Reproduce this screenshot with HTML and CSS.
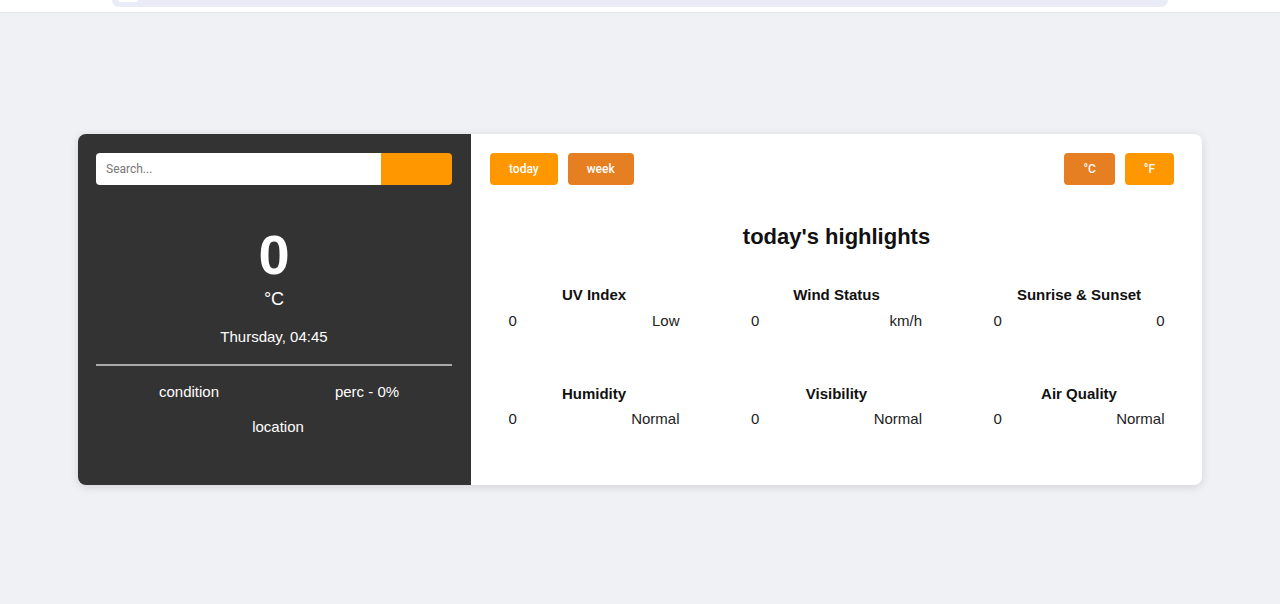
FILE: index.html
```html
<!DOCTYPE html>
<html lang="en">
<head>
<meta charset="utf-8">
<title>Weather</title>
<link rel="stylesheet" href="styles.css">
</head>
<body>
<div class="topbar">
  <div class="addr"><span class="addr-pill"></span></div>
</div>
<main class="page">
  <div class="card">
    <section class="left">
      <form class="search">
        <input class="search-input" type="text" placeholder="Search...">
        <button class="search-btn" type="button"></button>
      </form>
      <div class="temp">0</div>
      <div class="unit">°C</div>
      <div class="date">Thursday, 04:45</div>
      <div class="divider"></div>
      <div class="meta">
        <div class="meta-row">
          <span class="meta-item">condition</span>
          <span class="meta-item">perc - 0%</span>
        </div>
        <div class="location">location</div>
      </div>
    </section>
    <section class="right">
      <div class="toolbar">
        <div class="btn-group">
          <button class="btn btn-light" type="button">today</button>
          <button class="btn btn-dark" type="button">week</button>
        </div>
        <div class="btn-group">
          <button class="btn btn-dark" type="button">°C</button>
          <button class="btn btn-light" type="button">°F</button>
        </div>
      </div>
      <h2 class="heading">today's highlights</h2>
      <div class="grid">
        <div class="cell">
          <div class="cell-title">UV Index</div>
          <div class="cell-row"><span>0</span><span>Low</span></div>
        </div>
        <div class="cell">
          <div class="cell-title">Wind Status</div>
          <div class="cell-row"><span>0</span><span>km/h</span></div>
        </div>
        <div class="cell">
          <div class="cell-title">Sunrise &amp; Sunset</div>
          <div class="cell-row"><span>0</span><span>0</span></div>
        </div>
        <div class="cell">
          <div class="cell-title">Humidity</div>
          <div class="cell-row"><span>0</span><span>Normal</span></div>
        </div>
        <div class="cell">
          <div class="cell-title">Visibility</div>
          <div class="cell-row"><span>0</span><span>Normal</span></div>
        </div>
        <div class="cell">
          <div class="cell-title">Air Quality</div>
          <div class="cell-row"><span>0</span><span>Normal</span></div>
        </div>
      </div>
    </section>
  </div>
</main>
</body>
</html>
```

FILE: styles.css
```css
* { box-sizing: border-box; }

html, body {
  margin: 0;
  padding: 0;
}

body {
  background: #f0f1f5;
  font-family: "Liberation Sans", Arial, sans-serif;
  height: 604px;
  overflow: hidden;
}

.topbar {
  height: 13px;
  background: #ffffff;
  border-bottom: 1px solid #e4e5e8;
  padding-left: 112px;
}

.addr {
  width: 1056px;
  height: 7px;
  background: #e9ebf7;
  border-radius: 0 0 10px 10px;
  padding-left: 6px;
}

.addr-pill {
  display: block;
  width: 20px;
  height: 2px;
  background: #ffffff;
  border-radius: 0 0 4px 4px;
}

.page {
  display: flex;
  justify-content: center;
  padding-top: 121px;
}

.card {
  display: flex;
  width: 1124px;
  height: 351px;
  border-radius: 8px;
  box-shadow: 0 2px 10px rgba(0, 0, 0, 0.12);
  background: #ffffff;
}

.left {
  width: 393px;
  background: #333333;
  color: #ffffff;
  border-radius: 8px 0 0 8px;
  padding: 19px 19px 0 18px;
  text-align: center;
}

.search {
  display: flex;
  height: 32px;
  margin: 0;
}

.search-input {
  width: 285px;
  height: 32px;
  border: none;
  outline: none;
  border-radius: 4px 0 0 4px;
  padding: 0 10px;
  font-family: Roboto, "Liberation Sans", sans-serif;
  font-size: 12px;
  color: #333;
  background: #ffffff;
}

.search-input::placeholder {
  color: #777777;
}

.search-btn {
  width: 71px;
  height: 32px;
  border: none;
  background: #ff9800;
  border-radius: 0 4px 4px 0;
  padding: 0;
}

.temp {
  margin-top: 40px;
  font-size: 56px;
  font-weight: 700;
  line-height: 60px;
}

.unit {
  margin-top: 4px;
  font-size: 18px;
  line-height: 20px;
}

.date {
  margin-top: 19px;
  font-size: 15px;
  line-height: 18px;
}

.divider {
  margin-top: 18px;
  height: 2px;
  background: #a9a9a9;
}

.meta {
  padding-left: 4px;
  margin-right: -4px;
  font-size: 15px;
  line-height: 18px;
}

.meta-row {
  display: grid;
  grid-template-columns: 1fr 1fr;
  margin-top: 17px;
}

.location {
  margin-top: 17px;
}

.right {
  flex: 1;
  padding-top: 19px;
  border-radius: 0 8px 8px 0;
  color: #111111;
}

.toolbar {
  display: flex;
  justify-content: space-between;
  padding: 0 28px 0 19px;
}

.btn-group {
  display: flex;
  gap: 10px;
}

.btn {
  height: 32px;
  border: none;
  border-radius: 4px;
  padding: 0 19px;
  color: #ffffff;
  font-family: Roboto, "Liberation Sans", sans-serif;
  font-size: 12px;
  font-weight: 500;
}

.btn-light { background: #ff9800; }
.btn-dark { background: #e67e22; }

.heading {
  margin: 39px 0 0;
  text-align: center;
  font-size: 22px;
  line-height: 26px;
  font-weight: 700;
  color: #111111;
}

.grid {
  display: grid;
  grid-template-columns: repeat(3, 171px);
  column-gap: 71.5px;
  row-gap: 55px;
  justify-content: center;
  margin-top: 36px;
}

.cell-title {
  font-size: 15px;
  line-height: 18px;
  font-weight: 700;
  text-align: center;
  color: #111111;
}

.cell-row {
  display: flex;
  justify-content: space-between;
  margin-top: 7.5px;
  font-size: 15px;
  line-height: 18px;
  color: #222222;
}
```
